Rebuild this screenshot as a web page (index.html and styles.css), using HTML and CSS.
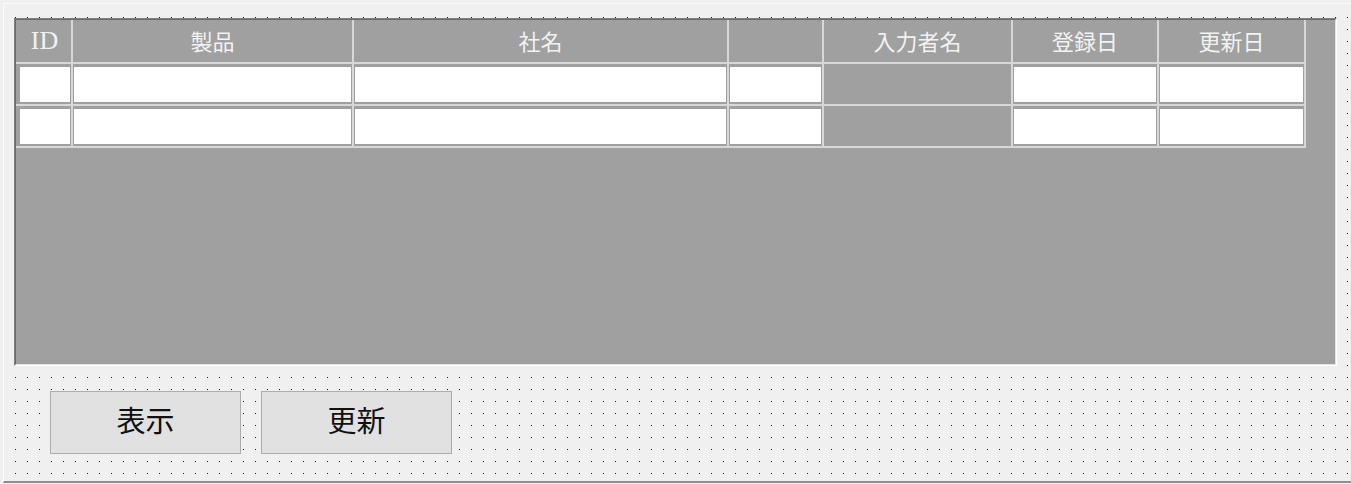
FILE: index.html
```html
<!DOCTYPE html>
<html lang="ja">
<head>
<meta charset="utf-8">
<title>Form Designer</title>
<link rel="stylesheet" href="styles.css">
</head>
<body>
<div class="form">
  <div class="grid-box">
    <div class="grid-inner">
      <div class="table">
        <div class="hcell id">ID</div>
        <div class="hcell">製品</div>
        <div class="hcell">社名</div>
        <div class="hcell"></div>
        <div class="hcell">入力者名</div>
        <div class="hcell">登録日</div>
        <div class="hcell">更新日</div>

        <div class="cell first"><div class="box"></div></div>
        <div class="cell"><div class="box"></div></div>
        <div class="cell"><div class="box"></div></div>
        <div class="cell"><div class="box"></div></div>
        <div class="cell"></div>
        <div class="cell"><div class="box"></div></div>
        <div class="cell"><div class="box"></div></div>

        <div class="cell first"><div class="box"></div></div>
        <div class="cell"><div class="box"></div></div>
        <div class="cell"><div class="box"></div></div>
        <div class="cell"><div class="box"></div></div>
        <div class="cell"></div>
        <div class="cell"><div class="box"></div></div>
        <div class="cell"><div class="box"></div></div>
      </div>
    </div>
  </div>
  <div class="buttons">
    <button class="btn" type="button">表示</button>
    <button class="btn" type="button">更新</button>
  </div>
</div>
</body>
</html>
```
FILE: styles.css
```css
html, body {
  margin: 0;
  padding: 0;
  background: #f0f0f0;
  overflow: hidden;
}

body {
  width: 1351px;
  height: 484px;
  font-family: "Noto Sans CJK JP", "Noto Sans", sans-serif;
}

.form {
  margin: 3px 0 0 3px;
  height: 464px;
  padding: 13px 0 0 10px;
  border-top: 1px solid #fbfbfb;
  border-left: 1px solid #fbfbfb;
  border-bottom: 2px solid #8e8e8e;
  background-color: #f0f0f0;
  background-image: conic-gradient(at 1px 1px, transparent 75%, #141414 0);
  background-size: 12px 12px;
  background-origin: content-box;
  background-clip: content-box;
  background-position: 1px 0;
  display: flex;
  flex-direction: column;
}

.grid-box {
  margin: 1px 0 0 0;
  width: 1323px;
  height: 348px;
  box-sizing: border-box;
  border-top: 1px solid #808080;
  border-left: 1px solid #808080;
  border-right: 1px solid #ffffff;
  border-bottom: 1px solid #ffffff;
}

.grid-inner {
  height: 100%;
  box-sizing: border-box;
  border-top: 1px solid #696969;
  border-left: 1px solid #696969;
  border-right: 1px solid #e3e3e3;
  border-bottom: 1px solid #e3e3e3;
  background: #a0a0a0;
}

.table {
  display: grid;
  grid-template-columns: 57px 281px 375px 95px 189px 146px 147px;
  grid-template-rows: 44px 42px 42px;
  width: 1290px;
}

.hcell {
  border-right: 2px solid #d7d7d7;
  border-bottom: 2px solid #d7d7d7;
  padding-bottom: 3px;
  display: flex;
  align-items: center;
  justify-content: center;
  color: #f2f2f2;
  font-size: 22px;
  font-family: "Noto Sans CJK JP", "Noto Sans", sans-serif;
  white-space: nowrap;
}

.hcell.id {
  font-family: "Liberation Serif", "Noto Sans CJK JP", serif;
  font-size: 26px;
  padding-left: 2px;
  padding-bottom: 1px;
}

.cell {
  border-right: 2px solid #d7d7d7;
  border-bottom: 2px solid #d7d7d7;
  display: flex;
  flex-direction: column;
}

.box {
  flex: 1;
  margin: 3px 1px 2px 1px;
  background: #ffffff;
}

.cell.first .box {
  margin-left: 4px;
}

.buttons {
  display: flex;
  gap: 20px;
  margin: 25px 0 0 36px;
}

.btn {
  width: 191px;
  height: 63px;
  margin: 0;
  padding: 0 0 6px 0;
  box-sizing: border-box;
  border: 1px solid #adadad;
  background: #e1e1e1;
  color: #111111;
  font-family: "Noto Sans CJK JP", "Noto Sans", sans-serif;
  font-size: 29px;
  line-height: 1;
  border-radius: 0;
}
```
